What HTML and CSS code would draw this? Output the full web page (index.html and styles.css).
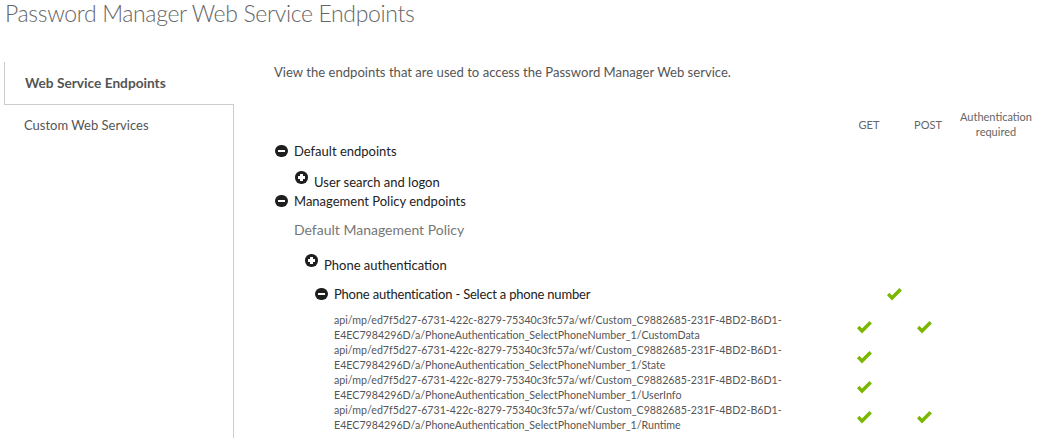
FILE: index.html
```html
<!DOCTYPE html>
<html>
<head>
<meta charset="utf-8">
<link rel="stylesheet" href="styles.css">
</head>
<body>
<h1 class="title">Password Manager Web Service Endpoints</h1>
<div class="layout">
  <nav class="sidebar">
    <div class="tab tab-active">Web Service Endpoints</div>
    <div class="tab-rest">
      <div class="tab">Custom Web Services</div>
    </div>
  </nav>
  <main class="content">
    <p class="desc">View the endpoints that are used to access the Password Manager Web service.</p>
    <div class="head-row">
      <div class="tree-col"></div>
      <div class="col col-get">GET</div>
      <div class="col col-post">POST</div>
      <div class="col col-auth">Authentication<br>required</div>
    </div>

    <div class="node lvl0 row-a">
      <span class="ico minus"></span><span class="label">Default endpoints</span>
    </div>
    <div class="node lvl1 row-b low">
      <span class="ico plus"></span><span class="label">User search and logon</span>
    </div>
    <div class="node lvl0 row-c">
      <span class="ico minus"></span><span class="label">Management Policy endpoints</span>
    </div>
    <div class="policy">Default Management Policy</div>
    <div class="node lvl2 row-e low">
      <span class="ico plus"></span><span class="label">Phone authentication</span>
    </div>
    <div class="grid-row row-f">
      <div class="node lvl3">
        <span class="ico minus"></span><span class="label">Phone authentication - Select a phone number</span>
      </div>
      <div class="col span2"><svg class="check" viewBox="0 0 15 15"><path d="M0 8.2 L2.4 5.8 L5 8.4 L12.4 1 L14.9 3.5 L5 13.4 Z"/></svg></div>
      <div class="col"></div>
    </div>

    <div class="grid-row ep">
      <div class="ep-text">api/mp/ed7f5d27-6731-422c-8279-75340c3fc57a/wf/Custom_C9882685-231F-4BD2-B6D1-<br>E4EC7984296D/a/PhoneAuthentication_SelectPhoneNumber_1/CustomData</div>
      <div class="col"><svg class="check" viewBox="0 0 15 15"><path d="M0 8.2 L2.4 5.8 L5 8.4 L12.4 1 L14.9 3.5 L5 13.4 Z"/></svg></div>
      <div class="col"><svg class="check" viewBox="0 0 15 15"><path d="M0 8.2 L2.4 5.8 L5 8.4 L12.4 1 L14.9 3.5 L5 13.4 Z"/></svg></div>
      <div class="col"></div>
    </div>
    <div class="grid-row ep">
      <div class="ep-text">api/mp/ed7f5d27-6731-422c-8279-75340c3fc57a/wf/Custom_C9882685-231F-4BD2-B6D1-<br>E4EC7984296D/a/PhoneAuthentication_SelectPhoneNumber_1/State</div>
      <div class="col"><svg class="check" viewBox="0 0 15 15"><path d="M0 8.2 L2.4 5.8 L5 8.4 L12.4 1 L14.9 3.5 L5 13.4 Z"/></svg></div>
      <div class="col"></div>
      <div class="col"></div>
    </div>
    <div class="grid-row ep">
      <div class="ep-text">api/mp/ed7f5d27-6731-422c-8279-75340c3fc57a/wf/Custom_C9882685-231F-4BD2-B6D1-<br>E4EC7984296D/a/PhoneAuthentication_SelectPhoneNumber_1/UserInfo</div>
      <div class="col"><svg class="check" viewBox="0 0 15 15"><path d="M0 8.2 L2.4 5.8 L5 8.4 L12.4 1 L14.9 3.5 L5 13.4 Z"/></svg></div>
      <div class="col"></div>
      <div class="col"></div>
    </div>
    <div class="grid-row ep">
      <div class="ep-text">api/mp/ed7f5d27-6731-422c-8279-75340c3fc57a/wf/Custom_C9882685-231F-4BD2-B6D1-<br>E4EC7984296D/a/PhoneAuthentication_SelectPhoneNumber_1/Runtime</div>
      <div class="col"><svg class="check" viewBox="0 0 15 15"><path d="M0 8.2 L2.4 5.8 L5 8.4 L12.4 1 L14.9 3.5 L5 13.4 Z"/></svg></div>
      <div class="col"><svg class="check" viewBox="0 0 15 15"><path d="M0 8.2 L2.4 5.8 L5 8.4 L12.4 1 L14.9 3.5 L5 13.4 Z"/></svg></div>
      <div class="col"></div>
    </div>
  </main>
</div>
</body>
</html>
```
FILE: styles.css
```css
html, body {
  margin: 0;
  padding: 0;
  background: #fff;
  font-family: Lato, "Open Sans", "Liberation Sans", sans-serif;
  color: #333;
  overflow: hidden;
}

.title {
  margin: 0 0 0 5px;
  height: 62px;
  font-size: 23px;
  line-height: 26px;
  font-weight: 300;
  color: #666;
  letter-spacing: -0.35px;
}

.layout {
  display: flex;
  height: 376px;
}

.sidebar {
  width: 230px;
  margin-left: 4px;
  display: flex;
  flex-direction: column;
}

.tab {
  font-size: 13px;
  color: #555;
  padding-left: 20px;
}

.tab-active {
  height: 42px;
  line-height: 42px;
  border-left: 1px solid #ccc;
  border-bottom: 1px solid #ccc;
  font-weight: 700;
  font-size: 13.7px;
}

.tab-rest {
  flex: 1;
  border-right: 1px solid #ccc;
}

.tab-rest .tab {
  padding-top: 10px;
  line-height: 20px;
}

.content {
  flex: 1;
  padding-left: 40px;
}

.desc {
  margin: 0;
  font-size: 13.1px;
  line-height: 20px;
  color: #555;
}

.head-row, .grid-row {
  display: grid;
  grid-template-columns: 1fr 60px 60px 80px 15px;
}

.head-row {
  margin-top: 25px;
  height: 34px;
  align-items: center;
  font-size: 11px;
  line-height: 15px;
  color: #666;
}

.col {
  text-align: center;
}

.col-get { padding-left: 6px; }
.col-post { padding-left: 4px; }

.node {
  display: flex;
  align-items: center;
  height: 20px;
}

.node.low {
  align-items: flex-start;
  height: 25px;
}

.node.low .ico { margin-top: 4px; }
.node.low .label { padding-top: 5px; }

.lvl0 { padding-left: 1px; }
.lvl1 { padding-left: 21px; }
.lvl2 { padding-left: 31px; }
.lvl3 { padding-left: 41px; }

.ico {
  position: relative;
  flex: none;
  width: 12.5px;
  height: 12.5px;
  border-radius: 50%;
  background: #1e1e1e;
  margin-right: 6.5px;
}

.ico::before, .plus::after {
  content: "";
  position: absolute;
  left: 2.5px;
  top: 5px;
  width: 7.5px;
  height: 2.5px;
  background: #fff;
}

.plus::after {
  left: 5px;
  top: 2.5px;
  width: 2.5px;
  height: 7.5px;
}

.label {
  font-size: 13px;
  line-height: 20px;
  color: #222;
  white-space: nowrap;
}

.row-f .label {
  letter-spacing: -0.2px;
}

.row-a { margin-top: 0; }
.row-b { margin-top: 6px; }
.row-c { margin-top: -1px; }

.policy {
  margin-top: 9px;
  padding-left: 20px;
  font-size: 14px;
  line-height: 20px;
  color: #777;
}

.row-e { margin-top: 10px; }

.row-f {
  margin-top: 9px;
  align-items: center;
  height: 20px;
}

.span2 {
  grid-column: span 2;
  padding-right: 4px;
}

.ep {
  align-items: center;
  height: 30px;
}

.row-f + .ep { margin-top: 8px; }

.ep-text {
  padding-left: 60px;
  font-size: 10.65px;
  line-height: 15px;
  color: #555;
  white-space: nowrap;
}

.ep .col:nth-child(2) { padding-right: 4px; }
.ep .col:nth-child(3) { padding-right: 4px; }

.check {
  display: block;
  margin: 0 auto;
  width: 15px;
  height: 15px;
  fill: #7ab800;
}
```
